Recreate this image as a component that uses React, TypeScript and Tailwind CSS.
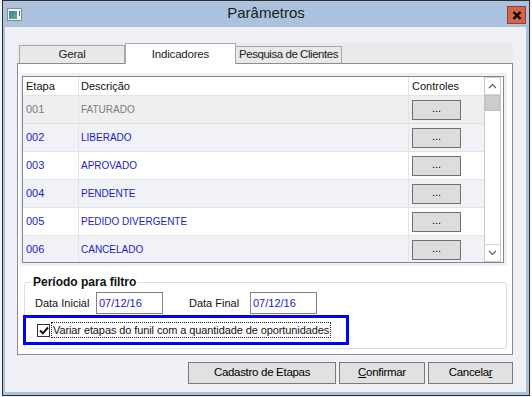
const rows = [
  { code: "001", desc: "FATURADO", bg: "bg-[#efefef]", text: "text-[#7d7d7d]" },
  { code: "002", desc: "LIBERADO", bg: "bg-[#f0f2f8]", text: "text-[#1c1cc4]" },
  { code: "003", desc: "APROVADO", bg: "bg-white", text: "text-[#1c1cc4]" },
  { code: "004", desc: "PENDENTE", bg: "bg-[#f0f2f8]", text: "text-[#1c1cc4]" },
  { code: "005", desc: "PEDIDO DIVERGENTE", bg: "bg-white", text: "text-[#1c1cc4]" },
  { code: "006", desc: "CANCELADO", bg: "bg-[#f0f2f8]", text: "text-[#1c1cc4]" },
];

function AppIcon() {
  return (
    <div className="w-[15px] h-[13px] border border-[#8a8a8a] bg-[#f4f4f4] flex items-end p-[1px] gap-[1px]">
      <div className="w-[8px] h-[8px] bg-gradient-to-br from-[#3b7fa0] to-[#58b48a]" />
      <div className="w-[1px] h-[5px] bg-[#3b6f90] self-start mt-[1px] ml-[1px]" />
    </div>
  );
}

function GridRow({ r }: { r: (typeof rows)[number] }) {
  return (
    <div className={`flex h-[28px] shrink-0 border-b border-[#e3e3e3] ${r.bg} ${r.text}`}>
      <div className="w-[56px] flex items-center pl-[3px] text-[11px] border-r border-[#e3e3e3]">{r.code}</div>
      <div className="flex-1 flex items-center pl-[2px] text-[10px] border-r border-[#e3e3e3]">{r.desc}</div>
      <div className="w-[75px] flex items-center pl-[3px]">
        <div className="w-[49px] h-[20px] bg-[#dddddd] border border-[#707070] flex items-center justify-center text-[11px] text-black leading-none pb-[3px]">
          ...
        </div>
      </div>
    </div>
  );
}

function Scrollbar() {
  return (
    <div className="w-[17px] border border-[#c9c9c9] bg-white flex flex-col">
      <div className="h-[17px] flex items-center justify-center border-b border-[#d6d6d6]">
        <svg width="9" height="6" viewBox="0 0 9 6">
          <path d="M1 5 L4.5 1.5 L8 5" fill="none" stroke="#606060" strokeWidth="1.2" />
        </svg>
      </div>
      <div className="h-[16px] bg-[#cdcdcd] border border-[#c0c0c0]" />
      <div className="flex-1" />
      <div className="h-[17px] flex items-center justify-center border-t border-[#d6d6d6]">
        <svg width="9" height="6" viewBox="0 0 9 6">
          <path d="M1 1 L4.5 4.5 L8 1" fill="none" stroke="#606060" strokeWidth="1.2" />
        </svg>
      </div>
    </div>
  );
}

function WinButton({ children, w }: { children: React.ReactNode; w: string }) {
  return (
    <div className={`${w} h-[22px] bg-[#e1e1e1] border border-[#7a7a7a] flex items-center justify-center text-[11.5px] tracking-[-0.3px] text-black`}>
      {children}
    </div>
  );
}

export default function App() {
  return (
    <div className="w-[532px] h-[397px] bg-[#f4f4f4] overflow-hidden font-['Liberation_Sans',sans-serif] text-[#111]">
      <div className="ml-[2px] w-[528px] h-[396px] border border-[#2e2e2e] bg-[#aac2dd] flex flex-col">
        {/* title bar */}
        <div className="h-[26px] shrink-0 relative flex items-center pl-[4px]">
          <AppIcon />
          <div className="absolute inset-0 flex items-center justify-center text-[15px] text-[#1b1b1b] pb-[2px]">Parâmetros</div>
          <div className="absolute left-[504px] top-[5px] w-[19px] h-[18px] bg-[#d3644c] border border-[#9c3b2a] flex items-center justify-center">
            <svg width="10" height="9" viewBox="0 0 10 9">
              <path d="M1.5 1 L8.5 8 M8.5 1 L1.5 8" stroke="#000" strokeWidth="2.4" />
            </svg>
          </div>
        </div>

        {/* client area */}
        <div className="flex-1 ml-[2px] mr-[3px] mb-[3px] bg-[#f0f1f7] pl-[12px] pt-[16px] flex flex-col">
          {/* tab strip */}
          <div className="w-[496px] h-[20px] bg-[#ebebeb] flex items-end pl-[2px] relative z-10">
            <div className="w-[106px] h-[18px] bg-[#e9e9e9] border border-b-0 border-[#a9a9a9] flex items-center justify-center text-[11.5px] tracking-[-0.2px] text-[#222]">
              Geral
            </div>
            <div className="w-[111px] h-[21px] -mb-px bg-white border border-b-0 border-[#a9a9a9] flex items-start justify-center pt-[2px] text-[11.5px] tracking-[-0.2px] text-[#222]">
              Indicadores
            </div>
            <div className="w-[106px] h-[17px] bg-[#e9e9e9] border border-b-0 border-l-0 border-[#a9a9a9] flex items-center pl-[3px] text-[11.5px] tracking-[-0.45px] text-[#222] whitespace-nowrap">
              Pesquisa de Clientes
            </div>
          </div>

          {/* tab panel */}
          <div className="w-[496px] h-[292px] bg-white border border-[#898c95] pl-[2px] pt-[9px] flex flex-col">
            <div className="w-[487px] h-[193px] bg-[#eef0f6] pl-[2px] pt-[3px]">
              <div className="w-[482px] h-[187px] border border-[#828790] bg-white flex overflow-hidden">
                <div className="flex-1 flex flex-col overflow-hidden">
                  <div className="flex h-[19px] shrink-0 border-b border-[#e3e3e3] bg-white text-[11px] text-[#111]">
                    <div className="w-[56px] flex items-center pl-[3px] border-r border-[#e3e3e3]">Etapa</div>
                    <div className="flex-1 flex items-center pl-[2px] border-r border-[#e3e3e3]">Descrição</div>
                    <div className="w-[75px] flex items-center pl-[3px]">Controles</div>
                  </div>
                  {rows.map((r) => (
                    <GridRow key={r.code} r={r} />
                  ))}
                </div>
                <Scrollbar />
                <div className="w-[2px]" />
              </div>
            </div>

            {/* period group */}
            <fieldset className="ml-[4px] mt-[9px] w-[483px] border border-[#d5dfe5] rounded-[3px] pb-[3px]">
              <legend className="ml-[6px] px-[2px] text-[12px] font-bold leading-[14px] text-[#111]">Período para filtro</legend>
              <div className="flex items-center mt-[3px] pl-[10px] text-[11px]">
                <div className="w-[61px]">Data Inicial</div>
                <div className="w-[67px] h-[22px] border border-[#828282] bg-white flex items-center pl-[2px] text-[#1c1cc4]">07/12/16</div>
                <div className="w-[26px]" />
                <div className="w-[61px]">Data Final</div>
                <div className="w-[67px] h-[22px] border border-[#828282] bg-white flex items-center pl-[2px] text-[#1c1cc4]">07/12/16</div>
              </div>
              <div className="-ml-[2px] mt-[1px] w-[326px] h-[30px] border-[3px] border-[#0000ff] flex items-center pl-[11px]">
                <div className="w-[13px] h-[13px] border border-[#333] bg-white flex items-center justify-center">
                  <svg width="10" height="9" viewBox="0 0 10 9">
                    <path d="M1 4.5 L3.8 7.3 L9 1.5" fill="none" stroke="#111" strokeWidth="2" />
                  </svg>
                </div>
                <div className="ml-[1px] px-[1px] border border-dotted border-[#222] text-[11px] tracking-[-0.1px] leading-[14px] whitespace-nowrap">
                  Variar etapas do funil com a quantidade de oportunidades
                </div>
              </div>
            </fieldset>
          </div>

          {/* buttons */}
          <div className="mt-[7px] w-[496px] flex justify-end gap-[3px]">
            <WinButton w="w-[148px]">Cadastro de Etapas</WinButton>
            <WinButton w="w-[86px]">
              <span><span className="underline">C</span>onfirmar</span>
            </WinButton>
            <WinButton w="w-[85px]">
              <span>Cancela<span className="underline">r</span></span>
            </WinButton>
          </div>
        </div>
      </div>
    </div>
  );
}
